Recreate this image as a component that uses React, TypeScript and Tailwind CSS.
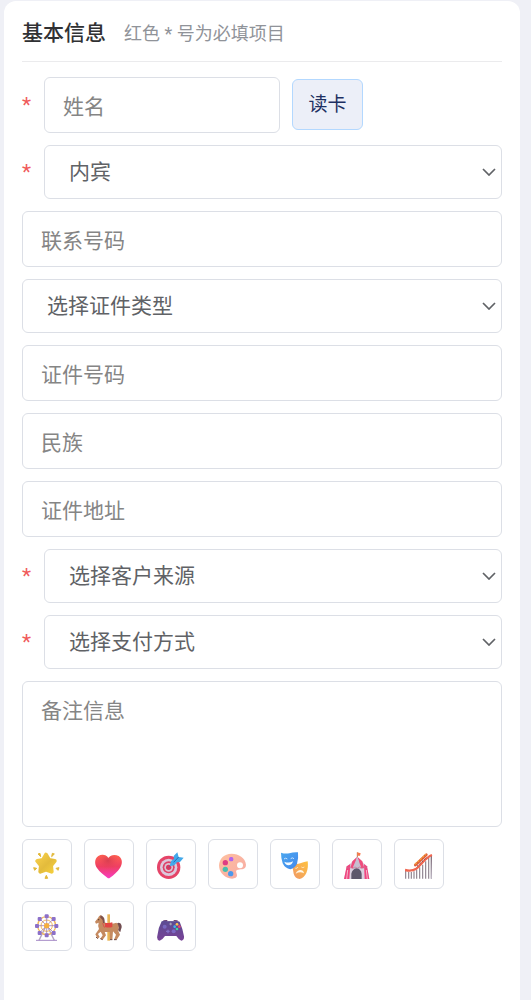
import type { ReactNode } from "react";

const fieldBorder = "rounded-md border border-[#dcdfe6] bg-white";
const inputClass = `${fieldBorder} h-14 w-full min-w-0 px-[18px] pt-1 text-[21px] text-[#606266] outline-none placeholder:text-[#858585] placeholder:opacity-100`;

function Required() {
  return (
    <span aria-hidden="true" className="w-[22px] shrink-0 text-[21px] leading-6 text-[#f05b5b]">
      *
    </span>
  );
}

function TextField({ label }: { label: string }) {
  return <input type="text" aria-label={label} placeholder={label} className={inputClass} />;
}

function SelectField({ label, required = false, options }: { label: string; required?: boolean; options: string[] }) {
  return (
    <div className="flex items-center">
      {required && <Required />}
      <div className="relative min-w-0 flex-1">
        <select
          aria-label={label}
          required={required}
          className={`${fieldBorder} block h-[54px] w-full appearance-none pl-6 pr-8 pt-0.5 text-[21px] text-[#606266] outline-none`}
        >
          {options.map((option) => (
            <option key={option}>{option}</option>
          ))}
        </select>
        <svg
          viewBox="0 0 14 8"
          className="pointer-events-none absolute right-1.5 top-1/2 h-2 w-3.5 -translate-y-1/2"
          fill="none"
          stroke="#606266"
          strokeWidth="1.7"
          aria-hidden="true"
        >
          <path d="M1 1l6 6 6-6" />
        </svg>
      </div>
    </div>
  );
}

const icons: { name: string; art: ReactNode }[] = [
  {
    name: "星星",
    art: (
      <>
        <defs>
          <linearGradient id="star" x1="0" y1="0" x2="1" y2="1">
            <stop offset="0" stopColor="#f7cf4a" />
            <stop offset=".55" stopColor="#e3bb3c" />
            <stop offset="1" stopColor="#f5cf3d" />
          </linearGradient>
        </defs>
        <path
          d="M39 8L48 24L65 27L54 40L56 59L39 53L22 59L24 40L13 27L30 24Z"
          fill="url(#star)"
          stroke="url(#star)"
          strokeWidth="12"
          strokeLinejoin="round"
        />
        <g fill="#e2b93b" stroke="#e2b93b" strokeWidth="3" strokeLinejoin="round">
          <path d="M15 6l6-2 2 10zM64 6l-6-2-2 10zM2 47l9 2-6 6zM78 47l-9 2 6 6zM40 70l4 9h-8z" />
        </g>
      </>
    ),
  },
  {
    name: "爱心",
    art: (
      <>
        <defs>
          <linearGradient id="heart" x1="0" y1="0" x2="0" y2="1">
            <stop offset="0" stopColor="#ff6250" />
            <stop offset=".5" stopColor="#ef3f62" />
            <stop offset="1" stopColor="#f83bc0" />
          </linearGradient>
          <radialGradient id="heartShade" cx=".48" cy=".25" r=".4">
            <stop offset="0" stopColor="#c9354c" stopOpacity=".65" />
            <stop offset="1" stopColor="#e84357" stopOpacity="0" />
          </radialGradient>
        </defs>
        <path d="M40 18C33 7 20 6 10 12C-2 20-2 36 6 48C14 60 28 71 37 77Q41 80 45 77C56 70 68 59 75 48C83 35 83 20 71 12C60 6 47 8 40 18Z" fill="url(#heart)" />
        <path d="M40 18C33 7 20 6 10 12C-2 20-2 36 6 48C14 60 28 71 37 77Q41 80 45 77C56 70 68 59 75 48C83 35 83 20 71 12C60 6 47 8 40 18Z" fill="url(#heartShade)" />
      </>
    ),
  },
  {
    name: "靶心",
    art: (
      <>
        <circle cx="35" cy="46" r="35" fill="#e54468" />
        <circle cx="35" cy="46" r="26" fill="#dcc9dc" />
        <circle cx="35" cy="46" r="18" fill="#df4168" />
        <circle cx="35" cy="46" r="13" fill="#dac3d3" />
        <circle cx="35" cy="46" r="8" fill="#d93861" />
        <path d="M35 46L52 29" stroke="#8d5273" strokeWidth="3" />
        <path d="M38 43L42 28L51 20L50 12L61 1L65 15L80 17L69 30L60 31L52 40Z" fill="#43a9ea" />
        <path d="M50 31L65 15" stroke="#2470bf" strokeWidth="3" />
      </>
    ),
  },
  {
    name: "调色板",
    art: (
      <>
        <defs>
          <linearGradient id="palette" x1="0" y1="0" x2="1" y2="1">
            <stop offset="0" stopColor="#ffc0a0" />
            <stop offset="1" stopColor="#f6aaa4" />
          </linearGradient>
        </defs>
        <path
          fillRule="evenodd"
          d="M38 5C15 5 1 20 0 40C0 59 13 74 31 79C44 82 54 78 54 70C54 63 48 58 54 54C61 49 81 57 81 38C79 17 59 5 38 5ZM63 31a9 9 0 1 1 0 18a9 9 0 1 1 0-18Z"
          fill="url(#palette)"
        />
        <rect x="30" y="15" width="13" height="13" rx="5" fill="#b264ed" />
        <circle cx="19" cy="32" r="8" fill="#de3c83" />
        <circle cx="19" cy="52" r="8" fill="#45bfae" />
        <circle cx="35" cy="65" r="8" fill="#4b98ed" />
      </>
    ),
  },
  {
    name: "面具",
    art: (
      <>
        <defs>
          <linearGradient id="maskBlue" x1="0" y1="0" x2="1" y2="1">
            <stop offset="0" stopColor="#4ba7ee" />
            <stop offset="1" stopColor="#4288ed" />
          </linearGradient>
          <linearGradient id="maskGold" x1="0" y1="1" x2="1" y2="0">
            <stop offset="0" stopColor="#ef9867" />
            <stop offset="1" stopColor="#ffc13f" />
          </linearGradient>
        </defs>
        <path d="M36 34Q47 38 58 34Q70 29 80 28Q83 47 76 63Q69 78 56 81Q42 79 38 65Q33 50 36 34Z" fill="url(#maskGold)" />
        <path d="M0 2Q12 6 25 4Q38 0 51 1Q53 19 48 35Q42 48 28 52Q12 49 5 34Q0 20 0 2Z" fill="url(#maskBlue)" />
        <path d="M10 29Q23 35 36 28Q33 40 22 40Q13 39 10 29Z" fill="#f5fbff" />
        <path d="M9 21Q14 16 19 21M29 20Q34 15 39 20" fill="none" stroke="#c8e4ff" strokeWidth="3" />
        <path d="M44 65Q49 54 58 54Q67 54 69 64Q57 57 44 65Z" fill="#fff8e8" />
        <path d="M43 49Q49 50 51 45M61 45Q66 49 70 45" fill="none" stroke="#ffe2b0" strokeWidth="3" />
      </>
    ),
  },
  {
    name: "马戏团",
    art: (
      <>
        <path d="M43 1V22" stroke="#b67b52" strokeWidth="3" />
        <path d="M43 1L53 4L51 11L43 11Z" fill="#f97849" />
        <path d="M42 15L11 45L3 81H79L72 43Z" fill="#d9d0df" />
        <path d="M42 15L28 28L22 49H34ZM44 15L58 28L64 49H51Z" fill="#ef4d7d" />
        <path d="M11 43L22 36L19 81H3ZM72 43L63 36L65 81H79Z" fill="#ef457f" />
        <path d="M30 45L43 15L54 45L50 54H34Z" fill="#c6bfd0" />
        <path d="M25 81V65Q28 51 41 49Q54 51 56 65V81Z" fill="#5c576b" />
        <path d="M10 45Q17 52 23 45Q29 53 36 45Q43 52 50 45Q57 52 63 45Q68 50 73 44" fill="none" stroke="#c9718f" strokeWidth="2" />
        <path d="M14 54L11 81M70 54L73 81" stroke="#f7b1c7" strokeWidth="3" />
      </>
    ),
  },
  {
    name: "过山车",
    art: (
      <>
        <defs>
          <linearGradient id="pillars" gradientUnits="userSpaceOnUse" x1="0" y1="10" x2="0" y2="81">
            <stop offset="0" stopColor="#766471" />
            <stop offset="1" stopColor="#c9c3d1" />
          </linearGradient>
        </defs>
        <path d="M2 56V80M11 59V80M19 60V80M27 58V80M35 54V80M44 46V80M53 38V80M62 28V80M71 18V80M79 10V80" fill="none" stroke="#8f838f" strokeWidth="3.5" />
        <path d="M79 10V80" stroke="url(#pillars)" strokeWidth="3" />
        <path d="M0 54Q20 59 34 50C47 41 62 15 81 9" fill="none" stroke="#f06650" strokeWidth="7" />
        <path d="M31 39L64 8" stroke="#dd5c38" strokeWidth="8" strokeLinecap="round" />
        <path d="M30 37L63 7" stroke="#f7a33e" strokeWidth="4" strokeDasharray="7 3" />
        <path d="M36 43L66 15" stroke="#714149" strokeWidth="3" strokeDasharray="5 5" />
      </>
    ),
  },
  {
    name: "摩天轮",
    art: (
      <>
        <path d="M37 40L18 79M45 40L64 79" stroke="#b4a5c3" strokeWidth="4" />
        <path d="M9 79H72" stroke="#a78bc7" strokeWidth="3" />
        <g fill="none" stroke="#f0b65b">
          <circle cx="41" cy="35" r="27" strokeWidth="4" />
          <circle cx="41" cy="35" r="17" strokeWidth="3" />
        </g>
        <path d="M41 7V63M13 35H69M21 15L61 55M61 15L21 55" stroke="#8c68ad" strokeWidth="2" />
        <circle cx="41" cy="35" r="8" fill="#f5ae3f" />
        <g fill="#8c70c9">
          <rect x="35" y="1" width="12" height="12" rx="3" />
          <rect x="14" y="9" width="12" height="12" rx="3" />
          <rect x="56" y="9" width="12" height="12" rx="3" />
          <rect x="6" y="30" width="12" height="12" rx="3" />
          <rect x="64" y="30" width="12" height="12" rx="3" />
          <rect x="14" y="51" width="12" height="12" rx="3" />
          <rect x="56" y="51" width="12" height="12" rx="3" />
          <rect x="35" y="58" width="12" height="12" rx="3" />
        </g>
      </>
    ),
  },
  {
    name: "旋转木马",
    art: (
      <>
        <path d="M41 1V80" stroke="#e9b557" strokeWidth="8" />
        <path d="M65 31Q68 23 76 28Q83 36 78 46L76 54Q67 51 70 43Q72 37 65 37Z" fill="#704c50" />
        <path
          d="M12 7L17 3L20 9Q27 14 29 26Q48 31 64 26Q75 34 69 49L75 62L65 77H57L63 62L54 52L52 77H45L44 54L29 54L33 64L23 77L16 74L23 64L17 53L9 60L14 69L8 74L1 61L12 45Q8 33 11 26L3 29L0 23L9 12Z"
          fill="#c58a60"
        />
        <path d="M18 4Q31 9 29 28L24 27Q23 15 15 10Z" fill="#80524a" />
        <path d="M30 26Q41 29 52 25V39Q41 42 30 39Z" fill="#e24643" />
        <path d="M23 27L27 39L30 40" fill="none" stroke="#d9564d" strokeWidth="3" />
        <circle cx="11" cy="17" r="2" fill="#53372f" />
        <path d="M8 74l-5-5M23 77l-7-3M65 77h-8M52 77h-7" stroke="#704b48" strokeWidth="3" />
      </>
    ),
  },
  {
    name: "游戏手柄",
    art: (
      <>
        <defs>
          <linearGradient id="pad" x1="0" y1="0" x2="0" y2="1">
            <stop offset="0" stopColor="#5b4c92" />
            <stop offset="1" stopColor="#794397" />
          </linearGradient>
        </defs>
        <path d="M17 22Q18 17 31 18V23H50V18Q62 17 64 22Z" fill="#704273" />
        <path d="M14 22Q23 19 32 22H50Q61 19 68 23Q77 43 81 67Q82 79 73 80Q64 76 58 66H24Q17 77 8 80Q-2 78 1 65Q4 40 14 22Z" fill="url(#pad)" />
        <circle cx="23" cy="38" r="6" fill="#7868bf" />
        <circle cx="50" cy="52" r="6" fill="#7b68c4" />
        <path d="M33 47v11M27 52h11" stroke="#8570c8" strokeWidth="4" />
        <path d="M41 26v8M37 30h8" stroke="#aaa5b7" strokeWidth="3" />
        <circle cx="60" cy="31" r="4" fill="#ffc14e" />
        <circle cx="53" cy="38" r="4" fill="#3bb6ef" />
        <circle cx="67" cy="38" r="4" fill="#f34469" />
        <circle cx="60" cy="45" r="4" fill="#43d69b" />
      </>
    ),
  },
];

export default function App() {
  return (
    <main className="flex min-h-screen bg-[#eff0f6] pl-1 pr-[11px] pt-px font-['Roboto','Noto_Sans_CJK_SC',sans-serif]">
      <form className="flex min-w-0 flex-1 flex-col gap-3 rounded-t-xl bg-white px-[18px] pb-12" onSubmit={(event) => event.preventDefault()}>
        <header className="mb-[3px] flex h-[61px] items-center gap-[18px] border-b border-[#ebebed] pt-1">
          <h1 className="text-[21px] font-medium leading-8 text-[#303133]">基本信息</h1>
          <p className="pt-0.5 text-[18px] leading-8 text-[#909399]">红色 * 号为必填项目</p>
        </header>

        <div className="flex items-center">
          <Required />
          <div className="mr-3 w-[236px] min-w-0">
            <TextField label="姓名" />
          </div>
          <button type="button" className="mt-0.5 h-[51px] w-[71px] shrink-0 self-start rounded-md border border-[#b3d8ff] bg-[#eceff8] pt-0.5 text-[19px] text-[#1d2f62]">
            读卡
          </button>
        </div>
        <SelectField label="宾客类型" required options={["内宾", "外宾"]} />
        <TextField label="联系号码" />
        <SelectField label="证件类型" options={["选择证件类型"]} />
        <TextField label="证件号码" />
        <TextField label="民族" />
        <TextField label="证件地址" />
        <SelectField label="客户来源" required options={["选择客户来源"]} />
        <SelectField label="支付方式" required options={["选择支付方式"]} />
        <textarea
          aria-label="备注信息"
          placeholder="备注信息"
          className={`${fieldBorder} block h-[146px] w-full resize-none px-[18px] py-[13px] text-[21px] leading-8 text-[#606266] outline-none placeholder:text-[#858585] placeholder:opacity-100`}
        />

        <div className="flex flex-wrap gap-3">
          {icons.map(({ name, art }) => (
            <button key={name} type="button" aria-label={name} className={`${fieldBorder} flex size-[50px] items-center justify-center pt-1`}>
              <svg viewBox="0 0 84 84" className="size-7" aria-hidden="true">
                {art}
              </svg>
            </button>
          ))}
        </div>
      </form>
    </main>
  );
}
